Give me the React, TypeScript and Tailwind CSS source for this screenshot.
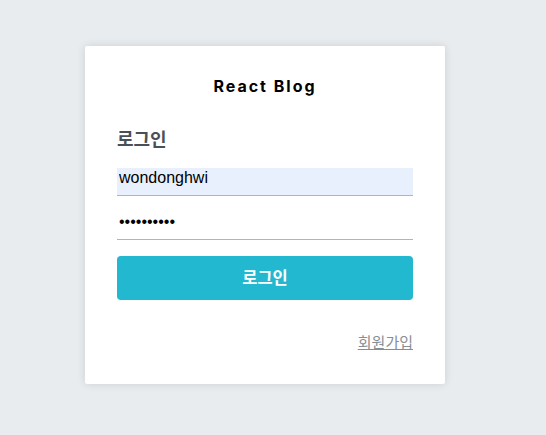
import { useState } from 'react';

export default function App() {
  const [username, setUsername] = useState('wondonghwi');
  const [password, setPassword] = useState('1234567890');

  return (
    <div className="min-h-[435px] bg-[#e9ecef]">
      <div className="w-[530px] h-[435px] flex items-center justify-center pb-[6px]">
        <div className="w-[360px] bg-white p-8 rounded-[2px] shadow-[0_0_8px_rgba(0,0,0,0.12)]">
          <div className="-mt-[4px] pb-[36px] text-center font-bold tracking-[2px] text-[16px] leading-[24px] text-black font-['Inter',sans-serif]">
            React Blog
          </div>
          <h3 className="text-[18px] leading-[24px] font-bold text-[#495057] mb-[18px] -mt-[8px] font-['Noto_Sans_CJK_KR',sans-serif]">
            로그인
          </h3>
          <form onSubmit={(e) => e.preventDefault()}>
            <input
              value={username}
              onChange={(e) => setUsername(e.target.value)}
              className="block w-full px-[2px] text-[16px] leading-[19px] pb-2 border-b border-[#adb5bd] bg-[#e8f0fe] outline-none text-black font-['Liberation_Sans',sans-serif]"
            />
            <input
              type="password"
              value={password}
              onChange={(e) => setPassword(e.target.value)}
              className="block w-full px-[2px] mt-4 text-[16px] leading-[19px] pb-2 border-b border-[#adb5bd] outline-none text-black font-['Liberation_Sans',sans-serif]"
            />
            <button className="block w-full mt-4 h-[44px] rounded-[4px] bg-[#22b8cf] text-white text-[16.5px] font-bold font-['Noto_Sans_CJK_KR',sans-serif]">
              로그인
            </button>
          </form>
          <div className="mt-8 text-right leading-[20px]">
            <a href="#" className="text-[#868e96] underline text-[15px] font-['Noto_Sans_CJK_KR',sans-serif]">
              회원가입
            </a>
          </div>
        </div>
      </div>
    </div>
  );
}
